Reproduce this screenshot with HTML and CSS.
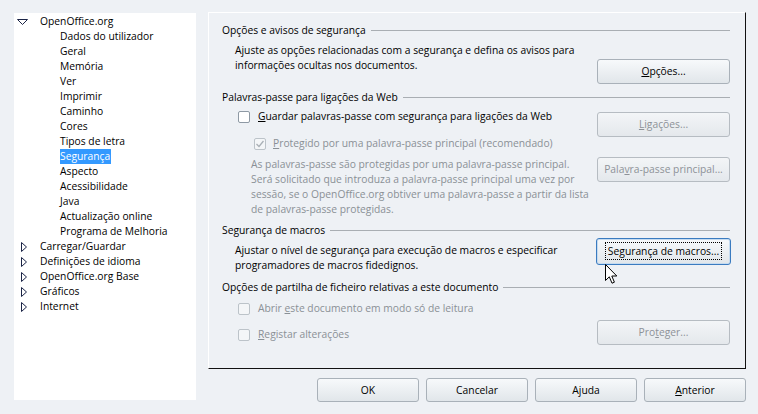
FILE: index.html
```html
<!DOCTYPE html>
<html lang="pt">
<head>
<meta charset="utf-8">
<title>Opções - Segurança</title>
<link rel="stylesheet" href="styles.css">
</head>
<body>
<div class="dialog">
  <div class="tree">
    <div class="row top"><span class="twisty"><svg width="11" height="6" viewBox="0 0 11 6"><path d="M0.5 0.5 L10.5 0.5 L5.5 5.5 Z" fill="none" stroke="#1b2446" stroke-width="1"/></svg></span><span class="lbl">OpenOffice.org</span></div>
    <div class="row child">Dados do utilizador</div>
    <div class="row child">Geral</div>
    <div class="row child">Memória</div>
    <div class="row child">Ver</div>
    <div class="row child">Imprimir</div>
    <div class="row child">Caminho</div>
    <div class="row child">Cores</div>
    <div class="row child">Tipos de letra</div>
    <div class="row child"><span class="sel">Segurança</span></div>
    <div class="row child">Aspecto</div>
    <div class="row child">Acessibilidade</div>
    <div class="row child">Java</div>
    <div class="row child">Actualização online</div>
    <div class="row child">Programa de Melhoria</div>
    <div class="row top"><span class="twisty r"><svg width="6" height="10" viewBox="0 0 6 10"><path d="M0.5 0.5 L5.5 5 L0.5 9.5 Z" fill="none" stroke="#1b2446" stroke-width="1"/></svg></span><span class="lbl">Carregar/Guardar</span></div>
    <div class="row top"><span class="twisty r"><svg width="6" height="10" viewBox="0 0 6 10"><path d="M0.5 0.5 L5.5 5 L0.5 9.5 Z" fill="none" stroke="#1b2446" stroke-width="1"/></svg></span><span class="lbl">Definições de idioma</span></div>
    <div class="row top"><span class="twisty r"><svg width="6" height="10" viewBox="0 0 6 10"><path d="M0.5 0.5 L5.5 5 L0.5 9.5 Z" fill="none" stroke="#1b2446" stroke-width="1"/></svg></span><span class="lbl">OpenOffice.org Base</span></div>
    <div class="row top"><span class="twisty r"><svg width="6" height="10" viewBox="0 0 6 10"><path d="M0.5 0.5 L5.5 5 L0.5 9.5 Z" fill="none" stroke="#1b2446" stroke-width="1"/></svg></span><span class="lbl">Gráficos</span></div>
    <div class="row top"><span class="twisty r"><svg width="6" height="10" viewBox="0 0 6 10"><path d="M0.5 0.5 L5.5 5 L0.5 9.5 Z" fill="none" stroke="#1b2446" stroke-width="1"/></svg></span><span class="lbl">Internet</span></div>
  </div>

  <div class="main">
    <div class="frame">
      <div class="hdr"><span>Opções e avisos de segurança</span><i class="rule"></i></div>
      <div class="body s1">
        <p class="txt">Ajuste as opções relacionadas com a segurança e defina os avisos para<br>informações ocultas nos documentos.</p>
        <button class="btn b-opcoes"><u>O</u>pções...</button>
      </div>

      <div class="hdr h2"><span>Palavras-passe para ligações da Web</span><i class="rule"></i></div>
      <div class="body s2">
        <div class="left">
          <div class="check"><span class="box"></span><span><u>G</u>uardar palavras-passe com segurança para ligações da Web</span></div>
          <div class="check sub dis"><span class="box on"><svg width="10" height="10" viewBox="0 0 10 10"><path d="M1.5 5 L4 7.5 L8.5 2" fill="none" stroke="#a9b0b6" stroke-width="1.3"/></svg></span><span><u>P</u>rotegido por uma palavra-passe principal (recomendado)</span></div>
          <p class="txt note dis">As palavras-passe são protegidas por uma palavra-passe principal.<br>Será solicitado que introduza a palavra-passe principal uma vez por<br>sessão, se o OpenOffice.org obtiver uma palavra-passe a partir da lista<br>de palavras-passe protegidas.</p>
        </div>
        <div class="right">
          <button class="btn dis b-lig" disabled><u>L</u>igações...</button>
          <button class="btn dis b-pp" disabled>Pala<u>v</u>ra-passe principal...</button>
        </div>
      </div>

      <div class="hdr h3"><span>Segurança de macros</span><i class="rule"></i></div>
      <div class="body s3">
        <p class="txt">Ajustar o nível de segurança para execução de macros e especificar<br>programadores de macros fidedignos.</p>
        <button class="btn focus"><span class="dots">Segurança de macros...</span></button>
      </div>

      <div class="hdr h4"><span>Opções de partilha de ficheiro relativas a este documento</span><i class="rule"></i></div>
      <div class="body s4">
        <div class="check dis c-abrir"><span class="box"></span><span>Abrir <u>e</u>ste documento em modo só de leitura</span></div>
        <div class="s4row">
          <div class="check dis c-reg"><span class="box"></span><span><u>R</u>egistar alterações</span></div>
          <button class="btn dis b-prot" disabled>Pro<u>t</u>eger...</button>
        </div>
      </div>
    </div>

    <div class="actions">
      <button class="btn act">OK</button>
      <button class="btn act">Cancelar</button>
      <button class="btn act">Ajuda</button>
      <button class="btn act"><u>A</u>nterior</button>
    </div>
  </div>
</div>

<svg class="cursor" width="13" height="21" viewBox="0 0 13 21"><path d="M0.5 0.5 L0.5 16.5 L4.3 12.8 L7 19.2 L9.4 18.2 L6.8 12 L11.8 12 Z" fill="#fff" stroke="#000" stroke-width="1" stroke-linejoin="miter"/></svg>
</body>
</html>
```

FILE: styles.css
```css
* { box-sizing: border-box; }
html, body { margin: 0; padding: 0; }
body {
  width: 758px;
  height: 414px;
  background: #eef1f5;
  font-family: "Open Sans", "Noto Sans", sans-serif;
  font-size: 10.3px;
  line-height: 15px;
  color: #000;
  position: relative;
  overflow: hidden;
}
u { text-decoration: underline; text-underline-offset: 1px; }

.dialog {
  display: flex;
  gap: 12px;
  padding: 12px 0 0 14px;
}

/* tree */
.tree {
  width: 182px;
  height: 387px;
  margin-top: 1px;
  padding-top: 1px;
  background: #fff;
}
.row {
  height: 15px;
  white-space: nowrap;
  display: flex;
  align-items: center;
}
.row.top { padding-left: 3px; }
.twisty { width: 23px; display: flex; align-items: center; }
.twisty.r { padding-left: 4px; }
.row.child { padding-left: 46px; }
.sel {
  background: #3399ff;
  color: #fff;
  padding: 0 1px 0 0;
  line-height: 15px;
}

/* main */
.main { width: 538px; }
.frame {
  height: 357px;
  border-top: 1px solid #fff;
  border-left: 1px solid #fff;
  border-right: 1px solid #111;
  border-bottom: 1px solid #111;
  padding: 10px 15px 0 13px;
}
.hdr {
  display: flex;
  align-items: center;
  gap: 5px;
  height: 15px;
  white-space: nowrap;
}
.rule {
  flex: 1;
  height: 1px;
  background: #a9aeb3;
}
.h2 { margin-top: 6px; }
.h3 { margin-top: 6px; }
.h4 { margin-top: 7px; }

.txt { margin: 0; white-space: nowrap; }
.body { display: flex; justify-content: space-between; }
.s1 { margin-top: 5px; padding-left: 13px; }
.s1 .btn { margin-top: 16px; }

.s2 { margin-top: 4px; }
.left { display: flex; flex-direction: column; }
.right { display: flex; flex-direction: column; }
.b-lig { margin-top: 3px; }
.b-pp { margin-top: 20px; }

.check {
  display: flex;
  align-items: center;
  gap: 8px;
  height: 15px;
  padding-left: 16px;
  white-space: nowrap;
}
.check.sub { padding-left: 32px; margin-top: 12px; gap: 7px; }
.box {
  width: 12px;
  height: 12px;
  border: 1px solid #8e99a4;
  border-radius: 2px;
  background: #fff;
  display: flex;
  align-items: center;
  justify-content: center;
  flex: none;
}
.dis .box { border-color: #bcc3c9; background: #f4f6f8; }
.dis { color: #8a9096; }
.note { padding-left: 29px; margin-top: 6px; }

.s3 { padding-left: 13px; }
.s3 .txt { padding-top: 5px; }

.s4 { flex-direction: column; margin-top: 6px; }
.s4row { display: flex; justify-content: space-between; align-items: flex-start; margin-top: 4px; }
.c-reg { margin-top: 7px; }

/* buttons */
.btn {
  font: inherit;
  line-height: 15px;
  color: #000;
  width: 133px;
  height: 25px;
  padding: 0;
  border: 1px solid #a9b1b9;
  border-radius: 3px;
  background: linear-gradient(#f7f9fb, #e1e6ea);
  text-align: center;
  white-space: nowrap;
}
.btn.dis { color: #8d9298; border-color: #b6bcc2; background: linear-gradient(#f3f5f7, #e4e8ec); }
.btn.focus {
  width: 135px;
  height: 27px;
  margin-right: -1px;
  border-color: #3a7bc0;
  box-shadow: inset 0 0 0 1px #c5dbf0;
}
.dots {
  display: inline-block;
  outline: 1px dotted #000;
  outline-offset: 1px;
  padding: 0 1px;
  line-height: 14px;
}

.actions {
  display: flex;
  justify-content: flex-end;
  gap: 7px;
  margin-top: 9px;
}
.btn.act { width: 102px; height: 24px; }

.cursor {
  position: absolute;
  left: 605px;
  top: 264px;
}
```
